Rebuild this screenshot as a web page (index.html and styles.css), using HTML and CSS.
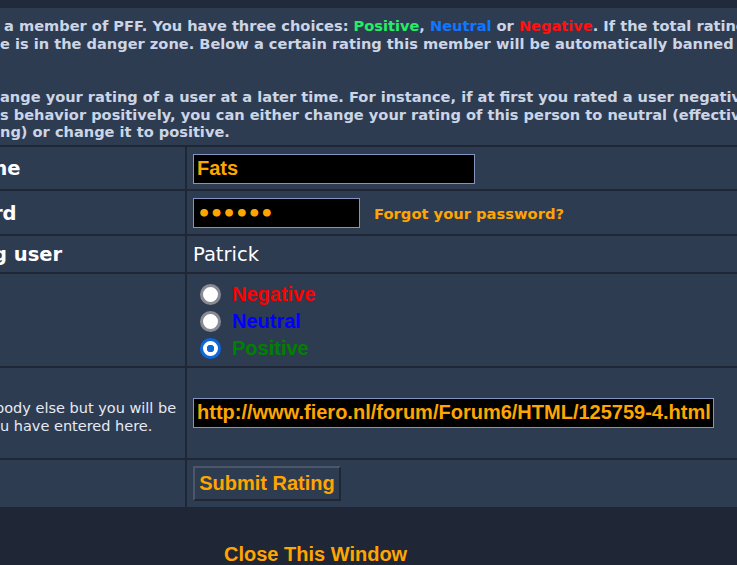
FILE: index.html
```html
<!DOCTYPE html>
<html lang="en">
<head>
  <meta charset="UTF-8">
  <title>Rate a member</title>
  <link rel="stylesheet" href="styles.css">
</head>
<body>
  <div class="topbar"></div>
  <div class="panel">
    <p class="intro first">a member of PFF. You have three choices: <span class="pos">Positive</span>, <span class="neu">Neutral</span> or <span class="neg">Negative</span>. If the total rating of<br>e is in the danger zone. Below a certain rating this member will be automatically banned from</p>
    <p class="intro">ange your rating of a user at a later time. For instance, if at first you rated a user negatively<br>s behavior positively, you can either change your rating of this person to neutral (effectively<br>ng) or change it to positive.</p>

    <form id="rateForm">
      <table class="rate-table">
        <tr class="row-user">
          <td class="label">me</td>
          <td class="field"><input type="text" class="box user-box" value="Fats"></td>
        </tr>
        <tr class="row-pass">
          <td class="label">rd</td>
          <td class="field">
            <input type="password" class="box pass-box" value="secret">
            <a href="#" class="forgot">Forgot your password?</a>
          </td>
        </tr>
        <tr class="row-rated">
          <td class="label">g user</td>
          <td class="field"><span class="rated-name">Patrick</span></td>
        </tr>
        <tr class="row-choice">
          <td class="label"></td>
          <td class="field">
            <div class="choice"><input type="radio" name="rating" id="neg"><label for="neg" class="neg-label">Negative</label></div>
            <div class="choice"><input type="radio" name="rating" id="neu"><label for="neu" class="neu-label">Neutral</label></div>
            <div class="choice"><input type="radio" name="rating" id="pos" checked><label for="pos" class="pos-label">Positive</label></div>
          </td>
        </tr>
        <tr class="row-link">
          <td class="label note">body else but you will be<br>u have entered here.</td>
          <td class="field"><input type="text" class="box link-box" value="http://www.fiero.nl/forum/Forum6/HTML/125759-4.html"></td>
        </tr>
        <tr class="row-submit">
          <td class="label"></td>
          <td class="field"><button type="submit" class="submit">Submit Rating</button></td>
        </tr>
      </table>
    </form>
  </div>
  <div class="footer">
    <a href="#" class="close-link">Close This Window</a>
  </div>
</body>
</html>
```

FILE: styles.css
```css
body {
  margin: 0;
  background-color: #1f2737;
  font-family: "DejaVu Sans", Verdana, sans-serif;
  overflow: hidden;
}

.topbar {
  height: 8px;
  background-color: #212a3a;
}

.panel {
  background-color: #2e3c52;
  padding-top: 9px;
}

.intro {
  margin: 0;
  font-size: 14.6px;
  font-weight: bold;
  line-height: 17.6px;
  color: #ccd5e6;
  white-space: nowrap;
  overflow: hidden;
}

.intro.first {
  text-indent: 4px;
}

.intro + .intro {
  margin-top: 36px;
}

.pos { color: #22ee66; }
.neu { color: #1177ff; }
.neg { color: #ff1111; }

.rate-table {
  width: 800px;
  margin: 4px 0 0 -2px;
  border-spacing: 2px;
  background-color: #1f2737;
}

.rate-table td {
  background-color: #2e3c52;
  padding: 2px 0 0 0;
}

.label {
  width: 185px;
  color: #ffffff;
  font-size: 19.5px;
  font-weight: bold;
  white-space: nowrap;
  overflow: hidden;
  text-indent: -7px;
}

.row-user .label {
  text-indent: -13px;
}

.rate-table .field {
  padding-left: 6px;
}

.row-user { height: 42px; }
.row-pass { height: 43px; }
.row-rated { height: 36px; }
.row-choice { height: 92px; }
.row-link { height: 90px; }
.row-submit { height: 47px; }

.rate-table .row-choice .field {
  padding-top: 3px;
}

.rate-table .row-link td,
.rate-table .row-submit td {
  padding-top: 0;
}

.box {
  box-sizing: border-box;
  height: 30px;
  margin: 0;
  padding: 0 3px;
  background-color: #000;
  border: 1px solid #8394be;
  color: #ffa500;
  font-family: "Liberation Sans", Arial, sans-serif;
  font-size: 20px;
  font-weight: bold;
  vertical-align: middle;
}

.box:focus {
  outline: none;
}

.user-box { width: 282px; }
.link-box { width: 521px; }

.pass-box {
  width: 167px;
  font-family: "DejaVu Sans", sans-serif;
  font-size: 22px;
  letter-spacing: -1.5px;
}

.forgot {
  margin-left: 9px;
  color: #ffa500;
  font-size: 14.7px;
  font-weight: bold;
  text-decoration: none;
  vertical-align: middle;
}

.rated-name {
  color: #ffffff;
  font-size: 19.5px;
}

.choice {
  display: flex;
  align-items: center;
  height: 27px;
}

.choice input {
  appearance: none;
  box-sizing: border-box;
  width: 21px;
  height: 21px;
  margin: 0 11px 0 7px;
  border-radius: 50%;
  border: 3px solid #8a8b92;
  background: #ffffff;
}

.choice input:checked {
  border-color: #0f67d9;
  background: radial-gradient(circle, #0f67d9 0 3.5px, #ffffff 4px);
}

.choice label {
  font-family: "Liberation Sans", Arial, sans-serif;
  font-size: 20px;
  font-weight: bold;
}

.neg-label { color: #ff0000; }
.neu-label { color: #0000ff; }
.pos-label { color: #008000; }

.rate-table .row-link .note {
  padding-top: 8px;
  font-size: 14.5px;
  font-weight: normal;
  line-height: 18.3px;
  color: #e6eaf2;
  text-indent: -5px;
}

.submit {
  width: 148px;
  height: 35px;
  padding: 0;
  background-color: #2e3c52;
  border: 2px solid;
  border-color: #4d576a #1f2735 #1f2735 #4d576a;
  color: #ffa500;
  font-family: "Liberation Sans", Arial, sans-serif;
  font-size: 20px;
  font-weight: bold;
  cursor: pointer;
}

.footer {
  height: 58px;
  padding-left: 224px;
  box-sizing: border-box;
  padding-top: 34px;
}

.close-link {
  color: #ffa500;
  font-family: "Liberation Sans", Arial, sans-serif;
  font-size: 20px;
  font-weight: bold;
  text-decoration: none;
}
```
